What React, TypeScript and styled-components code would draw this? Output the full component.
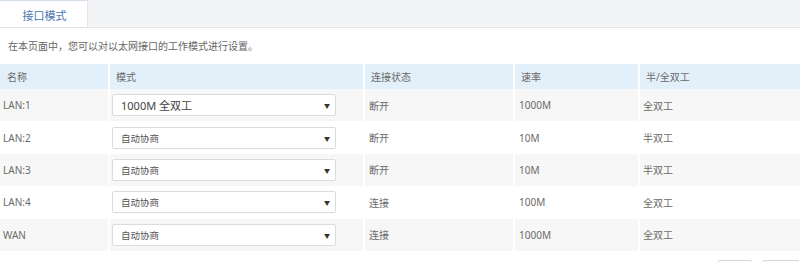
import styled, { createGlobalStyle } from "styled-components";

const GlobalStyle = createGlobalStyle`
  html, body {
    margin: 0;
    padding: 0;
    overflow: hidden;
    background: #fff;
  }
  body {
    font-family: "Noto Sans", "Noto Sans CJK SC", sans-serif;
    color: #666;
  }
`;

const rows = [
  { name: "LAN:1", mode: "1000M 全双工", state: "断开", speed: "1000M", duplex: "全双工" },
  { name: "LAN:2", mode: "自动协商", state: "断开", speed: "10M", duplex: "半双工" },
  { name: "LAN:3", mode: "自动协商", state: "断开", speed: "10M", duplex: "半双工" },
  { name: "LAN:4", mode: "自动协商", state: "连接", speed: "100M", duplex: "全双工" },
  { name: "WAN", mode: "自动协商", state: "连接", speed: "1000M", duplex: "全双工" },
];

function App() {
  return (
    <Page>
      <GlobalStyle />
      <TabBar>
        <Tab>接口模式</Tab>
      </TabBar>
      <Desc>在本页面中，您可以对以太网接口的工作模式进行设置。</Desc>
      <Table>
        <Row $head>
          <Cell>名称</Cell>
          <Cell $pad={6}>模式</Cell>
          <Cell $pad={6}>连接状态</Cell>
          <Cell $pad={6}>速率</Cell>
          <Cell $pad={6}>半/全双工</Cell>
        </Row>
        {rows.map((r, i) => (
          <Row key={r.name} $odd={i % 2 === 0}>
            <Cell $pad={3}>{r.name}</Cell>
            <Cell $pad={2}>
              <SelectBox $large={i === 0}>
                <span>{r.mode}</span>
                <Arrow>▼</Arrow>
              </SelectBox>
            </Cell>
            <Cell $pad={4}>{r.state}</Cell>
            <Cell $pad={4}>{r.speed}</Cell>
            <Cell $pad={3}>{r.duplex}</Cell>
          </Row>
        ))}
      </Table>
      {/* buttons below the fold, only their top edges show */}
      <Footer>
        <Button />
        <Button $wide />
      </Footer>
    </Page>
  );
}

export default App;

const Page = styled.div`
  width: 800px;
  height: 262px;
  overflow: hidden;
`;

const TabBar = styled.div`
  height: 27px;
  background: #f3f4f6;
  border-bottom: 1px solid #e2e4e7;
  display: flex;
`;

const Tab = styled.div`
  width: 88px;
  height: 27px;
  box-sizing: border-box;
  background: #fff;
  border-top: 1px solid #d3dde8;
  border-right: 1px solid #e4e6e9;
  margin-bottom: -1px;
  display: flex;
  align-items: center;
  justify-content: center;
  font-size: 11px;
  color: #4a76b0;
  padding: 1px 0 0 2px;
`;

const Desc = styled.div`
  font-size: 10px;
  color: #666;
  padding: 11px 0 0 8px;
  height: 25px;
  line-height: 14px;
  box-sizing: border-box;
  margin-bottom: 11px;
`;

const Table = styled.div`
  display: flex;
  flex-direction: column;
`;

const Row = styled.div<{ $head?: boolean; $odd?: boolean }>`
  display: grid;
  grid-template-columns: 108px 253px 148px 123px 1fr;
  column-gap: 2px;
  height: ${(p) => (p.$head ? "25px" : "32.4px")};
  & > div {
    background: ${(p) => (p.$head ? "#e3eff9" : p.$odd ? "#f7f7f7" : "#fff")};
  }
`;

const Cell = styled.div<{ $pad?: number }>`
  display: flex;
  align-items: center;
  padding-left: ${(p) => p.$pad ?? 7}px;
  font-size: 10px;
  color: #6a6a6a;
  white-space: nowrap;
  overflow: hidden;
`;

const SelectBox = styled.div<{ $large?: boolean }>`
  position: relative;
  width: 224px;
  height: 22px;
  box-sizing: border-box;
  background: #fff;
  border: 1px solid #dcdcdc;
  border-radius: 2px;
  display: flex;
  align-items: center;
  padding-left: 8px;
  font-size: ${(p) => (p.$large ? "11px" : "9.5px")};
  color: ${(p) => (p.$large ? "#444" : "#555")};
`;

const Arrow = styled.span`
  position: absolute;
  right: 5px;
  top: 50%;
  transform: translateY(-50%);
  font-size: 6px;
  color: #333;
`;

const Footer = styled.div`
  display: flex;
  justify-content: flex-end;
  gap: 10px;
  padding: 9px 1px 0 0;
`;

const Button = styled.div<{ $wide?: boolean }>`
  width: ${(p) => (p.$wide ? "37px" : "34px")};
  height: 24px;
  box-sizing: border-box;
  border: 1px solid #d6d6d6;
  border-radius: 2px;
  background: #fff;
`;
